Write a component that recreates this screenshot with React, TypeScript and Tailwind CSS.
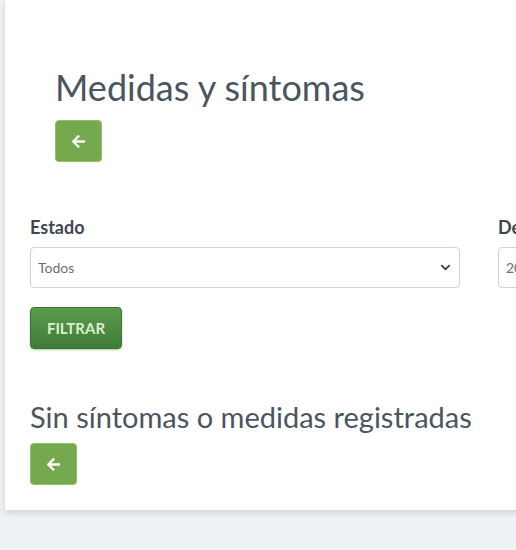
import { FaArrowLeft, FaChevronDown } from "react-icons/fa";

const BackButton = () => (
  <button className="flex h-[42px] w-[47px] items-center justify-center rounded-[4px] border border-[#8dc266] bg-[#74a94d] text-white">
    <FaArrowLeft className="h-[15px] w-[15px]" />
  </button>
);

export default function App() {
  return (
    <main className="h-[550px] w-full overflow-hidden bg-[#eef1f6] pl-[5px] font-['Lato',sans-serif]">
      <div className="h-[510px] w-[960px] bg-white shadow-[0_3px_6px_rgba(0,0,0,0.12)]">
        <section className="px-[50px] pt-[65px]">
          <h1 className="text-[36px] leading-[44px] text-[#4b5561]">Medidas y síntomas</h1>
          <div className="mt-[11px]">
            <BackButton />
          </div>
        </section>

        <section className="px-[25px] pt-[54px]">
          <div className="flex gap-[38px]">
            <div className="w-[430px] shrink-0">
              <label className="block text-[18px] font-bold leading-[22px] text-[#3e4751]">Estado</label>
              <div className="mt-[9px] flex h-[41px] items-center justify-between rounded-[4px] border border-[#cfd3d8] px-[7px] text-[14px] text-[#6b6f74]">
                <span>Todos</span>
                <FaChevronDown className="mr-[1px] h-[11px] w-[11px] text-[#3d4248]" />
              </div>
            </div>
            <div className="w-[430px] shrink-0">
              <label className="block text-[18px] font-bold leading-[22px] text-[#3e4751]">Desde</label>
              <div className="mt-[9px] flex h-[41px] items-center rounded-[4px] border border-[#cfd3d8] px-[7px] text-[14px] text-[#6b6f74]">
                <span>2020-01-01</span>
              </div>
            </div>
          </div>
          <button className="mt-[19px] h-[42px] w-[92px] rounded-[4px] border border-[#3b7233] bg-gradient-to-b from-[#5c9c4f] to-[#3f7c38] text-[15px] font-bold text-[#dcefcf] shadow-[0_1px_2px_rgba(90,170,60,0.5)]">
            FILTRAR
          </button>
        </section>

        <section className="px-[25px] pt-[50px]">
          <h2 className="text-[29px] leading-[36px] text-[#4b5561]">Sin síntomas o medidas registradas</h2>
          <div className="mt-[8px]">
            <BackButton />
          </div>
        </section>
      </div>
    </main>
  );
}
